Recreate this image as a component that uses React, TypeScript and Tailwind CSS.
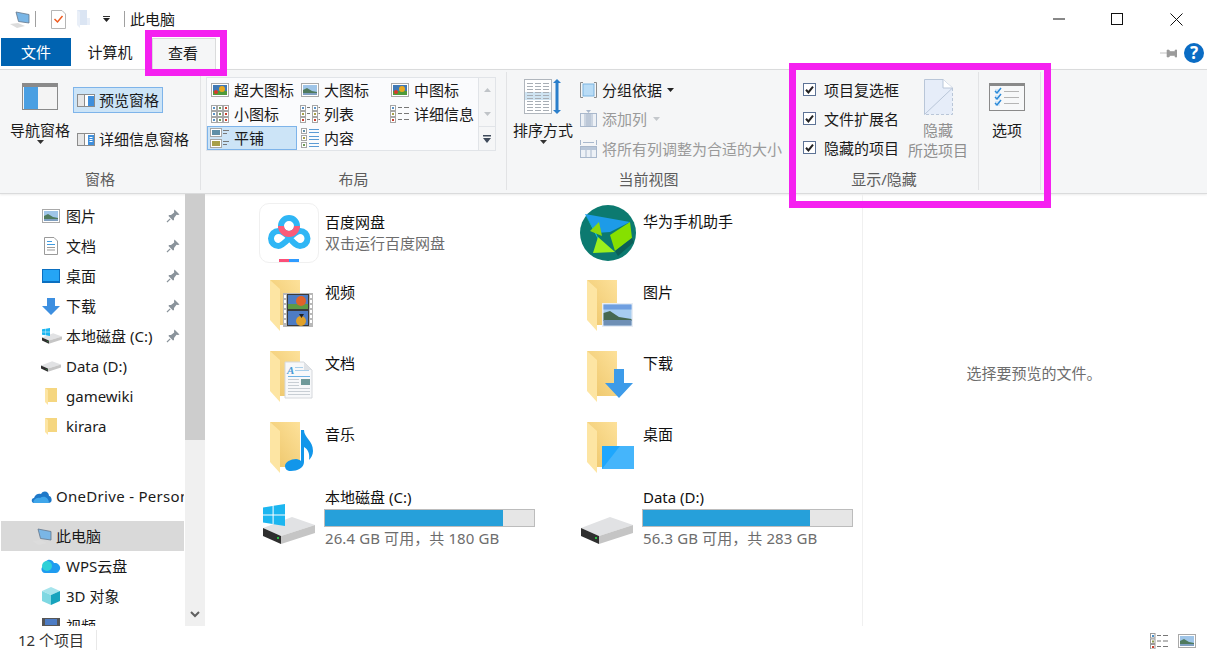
import React from "react";

const Landscape = ({ w = 18, h = 14 }: { w?: number; h?: number }) => (
  <svg width={w} height={h} viewBox="0 0 18 14" className="shrink-0">
    <rect x="0.5" y="0.5" width="17" height="13" fill="#fff" stroke="#a9a9a9" />
    <rect x="2" y="2" width="14" height="10" fill="#9fc5e8" />
    <path d="M2 7 L6 5 L11 8 L16 9 V12 H2 Z" fill="#4f7a5e" />
    <rect x="2" y="10" width="14" height="2" fill="#7f9fc0" />
  </svg>
);

const Flowers = () => (
  <svg width="18" height="14" viewBox="0 0 18 14" className="shrink-0">
    <rect x="0.5" y="0.5" width="17" height="13" fill="#fff" stroke="#a9a9a9" />
    <rect x="2" y="2" width="14" height="10" fill="#3f78b5" />
    <rect x="2" y="8" width="14" height="4" fill="#4f9a3a" />
    <circle cx="11" cy="6" r="3" fill="#e9a81f" />
    <circle cx="5" cy="9" r="2" fill="#d8392b" />
  </svg>
);

const Cell = ({ x, y, s, c }: { x: number; y: number; s: number; c: string }) => (
  <g>
    <rect x={x + 0.5} y={y + 0.5} width={s} height={s} fill="#fff" stroke="#a6a6a6" />
    <rect x={x + 2} y={y + 2} width={s - 3} height={s - 3} fill={c} />
  </g>
);

const SmallIcons = () => (
  <svg width="18" height="18" viewBox="0 0 18 18" className="shrink-0">
    {[0, 6, 12].map((y) =>
      [0, 6, 12].map((x, i) => (
        <Cell key={`${x}-${y}`} x={x} y={y} s={5} c={["#5b93c7", "#6e9a55", "#c9402f"][i]} />
      ))
    )}
  </svg>
);

const ListIcon = () => (
  <svg width="20" height="18" viewBox="0 0 20 18" className="shrink-0">
    {[0, 6, 12].map((y, i) => (
      <g key={y}>
        <Cell x={0} y={y} s={5} c={["#5b93c7", "#a8a04a", "#c9402f"][i]} />
        <rect x="7" y={y + 2} width="3" height="1" fill="#777" />
        <Cell x={12} y={y} s={5} c={["#5b93c7", "#a8a04a", "#c9402f"][i]} />
        <rect x="18.5" y={y + 2} width="1.5" height="1" fill="#777" />
      </g>
    ))}
  </svg>
);

const DetailsIcon = () => (
  <svg width="20" height="18" viewBox="0 0 20 18" className="shrink-0">
    {[0, 6, 12].map((y, i) => (
      <g key={y}>
        <Cell x={0} y={y} s={5} c={["#5b93c7", "#a8a04a", "#c9402f"][i]} />
        <rect x="8" y={y + 2} width="4" height="1" fill="#777" />
        <rect x="14" y={y + 2} width="5" height="1" fill="#777" />
      </g>
    ))}
  </svg>
);

const TileIcon = () => (
  <svg width="20" height="20" viewBox="0 0 20 20" className="shrink-0">
    <rect x="0.5" y="0.5" width="11" height="8" fill="#fff" stroke="#a6a6a6" />
    <rect x="2" y="2" width="8" height="5" fill="#5f8fa8" />
    <rect x="0.5" y="11.5" width="11" height="8" fill="#fff" stroke="#a6a6a6" />
    <rect x="2" y="13" width="8" height="5" fill="#a8a04a" />
    {[2, 5, 13, 16].map((y, i) => (
      <rect key={y} x="13" y={y} width={i % 2 ? 4 : 6} height="1" fill="#777" />
    ))}
  </svg>
);

const ContentIcon = () => (
  <svg width="18" height="20" viewBox="0 0 18 20" className="shrink-0">
    {[0, 7, 14].map((y, i) => (
      <g key={y}>
        <Cell x={0} y={y} s={5} c={["#5f8fa8", "#a8a04a", "#6e9a55"][i]} />
        <rect x="8" y={y + 1} width="10" height="1" fill="#5b9bd5" />
        <rect x="8" y={y + 4} width="10" height="1" fill="#5b9bd5" />
      </g>
    ))}
  </svg>
);

const PaneIcon = ({ blue = false }: { blue?: boolean }) => (
  <svg width="18" height="13" viewBox="0 0 18 13" className="shrink-0">
    <rect x="0.5" y="0.5" width="17" height="12" fill="#fff" stroke="#8c8c8c" />
    <rect x="1" y="1" width="6" height="11" fill="#e6e6e6" />
    <rect x="7" y="0" width="1" height="13" fill="#8c8c8c" />
    <rect x="11" y="2" width="6" height="10" fill="#3f8fdc" />
    {blue && <rect x="12.5" y="4" width="3" height="1" fill="#fff" />}
    {blue && <rect x="12.5" y="6" width="3" height="1" fill="#fff" />}
    {blue && <rect x="12.5" y="8" width="3" height="1" fill="#fff" />}
  </svg>
);

const Caret = ({ c = "#333" }: { c?: string }) => (
  <svg width="7" height="4" viewBox="0 0 7 4" className="shrink-0">
    <path d="M0 0 H7 L3.5 4 Z" fill={c} />
  </svg>
);

const Check = () => (
  <svg width="13" height="13" viewBox="0 0 13 13" className="shrink-0">
    <rect x="0.5" y="0.5" width="12" height="12" fill="#fff" stroke="#5d7396" />
    <path d="M3 6.8 L5.4 9.4 L10 3.6" fill="none" stroke="#222" strokeWidth="2" />
  </svg>
);

const Pin = () => (
  <svg width="14" height="14" viewBox="0 0 14 14">
    <path d="M8.5 0.5 L13.5 5.5 L12 6 L10.5 5.8 L8 9 L8 11 L7 11.5 L2.5 7 L3 6 L5 6 L8.2 3.5 L8 2 Z" fill="#8a939b" />
    <path d="M4.2 9.8 L1 13" stroke="#8a939b" strokeWidth="1.2" />
  </svg>
);

const Drive = ({ w = 52, h = 27 }: { w?: number; h?: number }) => (
  <svg width={w} height={h} viewBox="0 0 52 27" className="shrink-0">
    <path d="M0 11 L29 0 L52 8 L18 19 Z" fill="#e1e2e4" />
    <path d="M18 19 L52 8 V16 L18 27 Z" fill="#c5c5c5" />
    <path d="M0 11 L18 19 V27 L0 19 Z" fill="#2e2e2e" />
    <rect x="14" y="20" width="2" height="2" fill="#28c040" />
  </svg>
);

const WinLogo = ({ s = 22 }: { s?: number }) => (
  <svg width={s} height={s} viewBox="0 0 22 22" className="shrink-0">
    <path d="M0 3.5 L9.6 2 V10.4 H0 Z M10.6 1.8 L22 0 V10.4 H10.6 Z M0 11.6 H9.6 V20 L0 18.6 Z M10.6 11.6 H22 V22 L10.6 20.2 Z" fill="#1cb6f0" />
  </svg>
);

const FolderBody = () => (
  <g>
    <path d="M0 0 H30 V45 H10 Z" fill="url(#folderBack)" />
    <path d="M0 0 L10 9 V51 L0 40 Z" fill="#fde5a3" />
  </g>
);

const Folder = ({ dx = 11, dy = 6, children }: { dx?: number; dy?: number; children: React.ReactNode }) => (
  <svg width="64" height="60" viewBox="0 0 64 60" className="shrink-0">
    <defs>
      <linearGradient id="folderBack" x1="0" y1="1" x2="1" y2="0">
        <stop offset="0" stopColor="#edc568" />
        <stop offset="1" stopColor="#fde19a" />
      </linearGradient>
    </defs>
    <g transform={`translate(${dx} ${dy})`}>
      <FolderBody />
    </g>
    {children}
  </svg>
);

const FilmOverlay = () => (
  <g>
    <rect x="24" y="19" width="30" height="34" fill="#b8b8b8" />
    <rect x="28" y="20" width="22" height="32" fill="#3a3a3a" />
    <rect x="29" y="21" width="20" height="14" fill="#4d7cc4" />
    <rect x="29" y="37" width="20" height="14" fill="#4d7cc4" />
    <rect x="29" y="30" width="20" height="5" fill="#5e9a46" />
    <circle cx="42" cy="27" r="5" fill="#e0632a" />
    <circle cx="42" cy="47" r="5" fill="#e0a12a" />
    <path d="M40 40 h5 l-2.5 4z" fill="#222" />
    {[21, 26, 31, 36, 41, 46].map((y) => (
      <g key={y}>
        <rect x="25" y={y} width="2" height="3" fill="#fff" />
        <rect x="51" y={y} width="2" height="3" fill="#fff" />
      </g>
    ))}
  </g>
);

const DocOverlay = () => (
  <g>
    <path d="M26 17 H45 L53 25 V53 H26 Z" fill="#f7f8fa" stroke="#d5d8dc" />
    <path d="M45 17 V25 H53 Z" fill="#dfe2e6" />
    <text x="28" y="29" fontSize="11" fontStyle="italic" fontWeight="700" fill="#4a9bd6" fontFamily="Liberation Serif, serif">A</text>
    <rect x="36" y="22" width="8" height="1" fill="#a9cfea" />
    <rect x="36" y="25" width="14" height="1" fill="#a9cfea" />
    <rect x="29" y="31" width="22" height="1" fill="#6db2e4" />
    <rect x="42" y="34" width="9" height="6" fill="#6f9a9a" />
    {[34, 37, 40, 43, 46, 49].map((y) => (
      <rect key={y} x="29" y={y} width={y < 41 ? 11 : 22} height="1" fill="#c8ced4" />
    ))}
  </g>
);

const MusicOverlay = () => (
  <path d="M42 14 H45 C45 22 54 24 54 35 C54 39 52 42 50 44 C51 38 49 33 45 31 V46 C45 52 38 55 32 55 C28 55 26 53 26 50 C26 46 32 43 37 43 C39 43 41 44 42 45 Z" fill="#1296ea" />
);

const PictureOverlay = () => (
  <g>
    <rect x="25" y="29" width="31" height="24" fill="#e8edf4" />
    <rect x="26.5" y="30.5" width="28" height="21" fill="#a7cdf0" />
    <rect x="26.5" y="30.5" width="28" height="5" fill="#6f9fe0" />
    <path d="M26.5 39 L33 37 L42 43 L54.5 45 V47 H26.5 Z" fill="#46684f" />
    <rect x="26.5" y="46" width="28" height="5.5" fill="#6e8fb5" />
  </g>
);

const ArrowOverlay = () => <path d="M37 24 H47 V38 H56 L42 53 L28 38 H37 Z" fill="#3d9be9" />;

const DesktopOverlay = () => (
  <g>
    <rect x="25" y="30" width="32" height="23" fill="#1ea7fd" />
    <path d="M25 53 L43 30 H57 V53 Z" fill="#45b5fb" />
  </g>
);

const Baidu = () => (
  <div className="w-[60px] h-[60px] rounded-[10px] border border-[#f0f0f0] bg-white relative overflow-hidden">
    <svg width="58" height="58" viewBox="0 0 58 58">
      <path d="M18.5 27 A7.5 7.5 0 1 0 18.5 42 C25 42 33 27 40 27 A7.5 7.5 0 1 1 40 42 C36 42 33 38 29.5 34 C26 30 22 27 18.5 27" fill="none" stroke="#2fb6f5" strokeWidth="6" />
      <circle cx="29" cy="22" r="8" fill="none" stroke="#2fb6f5" strokeWidth="6" />
      <path d="M21 22 A8 8 0 0 0 37 22" fill="none" stroke="#fb5b78" strokeWidth="6" />
      <rect x="19" y="55" width="10" height="3" fill="#fb4f78" />
      <rect x="29" y="55" width="10" height="3" fill="#2e9bff" />
    </svg>
  </div>
);

const Huawei = () => (
  <div className="pl-[3px] pt-[2px]">
    <svg width="56" height="56" viewBox="0 0 56 56" className="shrink-0">
      <circle cx="28" cy="28" r="28" fill="#0c7a70" />
      <path d="M5 9 L50 17 L30 27 L16 28 Z" fill="#1d9be8" />
      <path d="M5 9 L22 42 L16 28 Z" fill="#0cc7ea" />
      <path d="M30 30 L50 17 L52 33 L35 46 Z" fill="#86e000" />
      <path d="M18 32 L35 47 L13 48 Z" fill="#9bf01c" />
      <path d="M10 26 L19 17 L22 31 Z" fill="#8ad80e" />
      <path d="M35 46 L52 33 L54 37 L38 51 Z" fill="#0a5f58" />
    </svg>
  </div>
);

const ThisPc = ({ w = 20 }: { w?: number }) => (
  <svg width={w} height={w * 0.85} viewBox="0 0 20 17" className="shrink-0">
    <path d="M0 13 L8 12 L15 15 L7 17 Z" fill="#dcdcdc" />
    <path d="M6 1 L19 3.5 V12 L8.5 10.5 Z" fill="#7ab6e6" stroke="#64768a" strokeWidth="0.8" />
  </svg>
);

const Row = ({ icon, label, pin }: { icon: React.ReactNode; label: string; pin?: boolean }) => (
  <div className="h-[30px] flex items-center pl-[41px]">
    <div className="w-[18px] h-[18px] flex items-center justify-center shrink-0">{icon}</div>
    <span className="ml-[6px] flex-1 whitespace-nowrap leading-[20px]">{label}</span>
    {pin && (
      <span className="mr-[4px] flex">
        <Pin />
      </span>
    )}
  </div>
);

const GalleryItem = ({ icon, label, active }: { icon: React.ReactNode; label: string; active?: boolean }) => (
  <div className={`h-[24px] flex items-center ${active ? "bg-[#cce4f7] border border-[#7eb4ea] pl-[2px]" : "pl-[3px]"}`}>
    <div className="w-[20px] flex justify-center shrink-0">{icon}</div>
    <span className="ml-[4px] whitespace-nowrap leading-[20px]">{label}</span>
  </div>
);

const Group = ({ w, label, border = true, children }: { w: string; label?: string; border?: boolean; children: React.ReactNode }) => (
  <div className={`${w} h-[118px] my-[2px] flex flex-col shrink-0 ${border ? "border-r border-[#e2e3e5]" : ""}`}>
    <div className="h-[96px] flex">{children}</div>
    <div className="h-[22px] flex items-center justify-center text-[#5c5c5c] leading-[20px]">{label}</div>
  </div>
);

const Tile = ({ icon, name, sub, pt = "pt-[8px]" }: { icon: React.ReactNode; name: string; sub?: string; pt?: string }) => (
  <div className="flex">
    <div className="w-[66px] shrink-0">{icon}</div>
    <div className={`${pt} leading-[20px]`}>
      <div className="text-[#111]">{name}</div>
      {sub && <div className="mt-[1px] text-[#6d6d6d]">{sub}</div>}
    </div>
  </div>
);

const DiskTile = ({ win, name, used, sub }: { win?: boolean; name: string; used: string; sub: string }) => (
  <div className="flex">
    <div className="w-[65px] shrink-0 relative h-[60px]">
      <div className="pt-[30px] pl-[4px]">
        <Drive />
      </div>
      {win && (
        <div className="absolute left-[4px] top-[17px]">
          <WinLogo />
        </div>
      )}
    </div>
    <div className="w-[211px] leading-[20px]">
      <div className="text-[#111] pl-[1px]">{name}</div>
      <div className="mt-[2px] h-[18px] bg-[#e6e6e6] border border-[#bcbcbc]">
        <div className={`${used} h-full bg-[#26a0da]`} />
      </div>
      <div className="mt-[1px] pl-[1px] text-[#6d6d6d] tracking-[0.1px]">{sub}</div>
    </div>
  </div>
);

export default function App() {
  return (
    <div className="relative w-[1207px] h-[656px] bg-white overflow-hidden flex flex-col text-[15px] text-[#1a1a1a] [font-family:'Noto_Sans','Noto_Sans_CJK_SC',sans-serif]">
      {/* title bar */}
      <div className="h-[38px] flex items-center shrink-0 pl-[10px]">
        <ThisPc />
        <div className="ml-[5px] w-px h-[16px] bg-[#a0a0a0]" />
        <svg width="15" height="19" viewBox="0 0 15 19" className="ml-[15px] shrink-0">
          <path d="M0.5 0.5 H11 L14.5 4 V18.5 H0.5 Z" fill="#fff" stroke="#b5b5b5" />
          <path d="M3.5 9 L6.5 12 L11.5 6" fill="none" stroke="#ef5a1f" strokeWidth="1.5" />
        </svg>
        <svg width="13" height="18" viewBox="0 0 13 18" className="ml-[11px] shrink-0">
          <path d="M0 0 H10 V15 H3 Z" fill="#dbe5f3" />
          <path d="M0 0 L3 2 V18 L0 15 Z" fill="#e9eff8" />
          <rect x="10" y="8" width="3" height="7" fill="#e9eff8" />
        </svg>
        <div className="ml-[13px] flex flex-col items-center gap-[1px] w-[7px]">
          <div className="w-[7px] h-px bg-[#333]" />
          <Caret c="#222" />
        </div>
        <div className="ml-[14px] w-px h-[16px] bg-[#a0a0a0]" />
        <span className="ml-[5px] leading-[20px]">此电脑</span>
        <div className="ml-auto flex items-center">
          <svg width="12" height="12" viewBox="0 0 12 12" className="mr-[46px]">
            <path d="M0 6 H12" stroke="#111" />
          </svg>
          <svg width="12" height="12" viewBox="0 0 12 12" className="mr-[47px]">
            <rect x="0.5" y="0.5" width="11" height="11" fill="none" stroke="#111" />
          </svg>
          <svg width="13" height="13" viewBox="0 0 13 13" className="mr-[24px]">
            <path d="M0.5 0.5 L12.5 12.5 M12.5 0.5 L0.5 12.5" stroke="#111" />
          </svg>
        </div>
      </div>

      {/* tabs */}
      <div className="h-[31px] flex shrink-0 items-start">
        <div className="ml-[1px] w-[70px] h-[28px] bg-[#0063b1] text-white flex items-center justify-center leading-[20px]">文件</div>
        <div className="w-[78px] h-[28px] flex items-center justify-center leading-[20px]">计算机</div>
        <div className="ml-[3px] w-[64px] h-[31px] pb-[3px] pr-[2px] bg-[#f5f6f7] border border-b-0 border-[#dadbdc] flex items-center justify-center leading-[20px]">查看</div>
        <div className="ml-auto mr-[3px] flex items-center gap-[7px] h-[30px]">
          <svg width="17" height="9" viewBox="0 0 17 9">
            <path d="M0 4 H7 M7 1 H9 L10 2.5 H15 V1 H17 V8 H15 V6.5 H10 L9 8 H7 Z" fill="#9b9b9b" stroke="#9b9b9b" strokeWidth="0.6" />
          </svg>
          <div className="w-[20px] h-[20px] rounded-full bg-[#0a6cc4] text-white flex items-center justify-center text-[17px] font-bold leading-[20px]">?</div>
        </div>
      </div>

      {/* ribbon */}
      <div className="h-[125px] shrink-0 bg-[#f5f6f7] border-t border-b border-[#dadbdc] flex shadow-[0_1px_2px_rgba(0,0,0,0.08)]">
        <Group w="w-[201px]" label="窗格">
          <div className="ml-[10px] w-[60px] flex flex-col items-center pt-[11px]">
            <svg width="36" height="27" viewBox="0 0 36 27">
              <rect x="0.5" y="0.5" width="35" height="26" fill="#f4f4f4" stroke="#8a8a8a" />
              <rect x="1" y="1" width="34" height="3" fill="#8a8a8a" />
              <rect x="2" y="4" width="14" height="22" fill="#4a9fe2" />
            </svg>
            <span className="mt-[10px] leading-[20px] whitespace-nowrap">导航窗格</span>
            <div className="flex">
              <Caret />
            </div>
          </div>
          <div className="ml-[3px] pt-[15px]">
            <div className="w-[90px] h-[26px] bg-[#cce4f7] border border-[#7eb4ea] flex items-center pl-[3px]">
              <PaneIcon />
              <span className="ml-[4px] leading-[20px] whitespace-nowrap">预览窗格</span>
            </div>
            <div className="mt-[13px] h-[26px] flex items-center pl-[4px]">
              <PaneIcon blue />
              <span className="ml-[4px] leading-[20px] whitespace-nowrap">详细信息窗格</span>
            </div>
          </div>
        </Group>

        <Group w="w-[306px]" label="布局">
          <div className="ml-[5px] mt-[5px] h-[74px] flex">
            <div className="w-[273px] h-[74px] bg-[#fafbfd] border border-[#e1e4e8] grid grid-cols-[90px_90px_90px] grid-rows-[24px_24px_24px]">
              <GalleryItem icon={<Flowers />} label="超大图标" />
              <GalleryItem icon={<Landscape />} label="大图标" />
              <GalleryItem icon={<Flowers />} label="中图标" />
              <GalleryItem icon={<SmallIcons />} label="小图标" />
              <GalleryItem icon={<ListIcon />} label="列表" />
              <GalleryItem icon={<DetailsIcon />} label="详细信息" />
              <GalleryItem icon={<TileIcon />} label="平铺" active />
              <GalleryItem icon={<ContentIcon />} label="内容" />
            </div>
            <div className="w-[17px] h-[74px] border border-l-0 border-[#e1e4e8] flex flex-col items-center">
              <div className="h-[24px] flex items-center">
                <svg width="7" height="4" viewBox="0 0 7 4">
                  <path d="M0 4 H7 L3.5 0 Z" fill="#c0c4c8" />
                </svg>
              </div>
              <div className="h-[24px] flex items-center">
                <Caret c="#c0c4c8" />
              </div>
              <div className="h-[24px] w-full flex items-center justify-center border-t border-[#e1e4e8]">
                <svg width="8" height="8" viewBox="0 0 8 8">
                  <rect width="8" height="1.5" fill="#3f4a5a" />
                  <path d="M0 3 H8 L4 8 Z" fill="#3f4a5a" />
                </svg>
              </div>
            </div>
          </div>
        </Group>

        <Group w="w-[283px]" label="当前视图" border={false}>
          <div className="ml-[6px] w-[60px] flex flex-col items-center pt-[7px]">
            <svg width="38" height="36" viewBox="0 0 38 36">
              <rect x="0.5" y="0.5" width="27" height="34" fill="#fff" stroke="#b0b6bd" />
              <rect x="1" y="13" width="26" height="8" fill="#cfe4f2" />
              {[4, 7, 10, 13, 16, 19, 22, 25, 28, 31].map((y) => (
                <g key={y}>
                  <rect x="3" y={y} width="6" height="1" fill="#a8aeb5" />
                  <rect x="11" y={y} width="6" height="1" fill="#a8aeb5" />
                  <rect x="19" y={y} width="6" height="1" fill="#a8aeb5" />
                </g>
              ))}
              <path d="M33 0 L37 4 H34.5 V31 H37 L33 35 L29 31 H31.5 V4 H29 Z" fill="#2b7fcb" />
            </svg>
            <span className="mt-[5px] leading-[20px] whitespace-nowrap">排序方式</span>
            <div className="flex">
              <Caret />
            </div>
          </div>
          <div className="ml-[7px] pt-[3px] flex flex-col">
            <div className="h-[29px] flex items-center">
              <svg width="17" height="16" viewBox="0 0 17 16" className="shrink-0">
                <path d="M3 0.5 H0.5 V15.5 H3 M14 0.5 H16.5 V15.5 H14" fill="none" stroke="#8c8c8c" />
                <rect x="3" y="2" width="11" height="12" fill="#b9dcf6" stroke="#7db4e0" />
              </svg>
              <span className="ml-[5px] leading-[20px] whitespace-nowrap">分组依据</span>
              <span className="ml-[5px] flex">
                <Caret c="#222" />
              </span>
            </div>
            <div className="h-[29px] flex items-center text-[#9a9a9a]">
              <svg width="17" height="17" viewBox="0 0 17 17" className="shrink-0">
                <rect x="0.5" y="3.5" width="16" height="13" fill="#edf1f6" stroke="#a9b8cc" />
                <rect x="6" y="4" width="5" height="12" fill="#bcc8d8" />
                <path d="M5 4 V16 M12 4 V16" stroke="#a9b8cc" />
                <path d="M6 0 H11 L8.5 3 Z" fill="#a9b8cc" />
              </svg>
              <span className="ml-[5px] leading-[20px] whitespace-nowrap">添加列</span>
              <span className="ml-[6px] flex">
                <Caret c="#c4c8cc" />
              </span>
            </div>
            <div className="h-[31px] flex items-center text-[#9a9a9a]">
              <svg width="17" height="18" viewBox="0 0 17 18" className="shrink-0">
                <path d="M0.5 0 V5 M16.5 0 V5 M3 2.5 H14" stroke="#a9b8cc" />
                <rect x="0.5" y="6.5" width="16" height="11" fill="#edf1f6" stroke="#a9b8cc" />
                <rect x="1" y="7" width="15" height="3" fill="#b8c6d8" />
                <path d="M6 10 V17 M11 10 V17" stroke="#a9b8cc" />
              </svg>
              <span className="ml-[5px] leading-[20px] whitespace-nowrap">将所有列调整为合适的大小</span>
            </div>
          </div>
        </Group>

        <Group w="w-[189px]" label="显示/隐藏">
          <div className="ml-[13px] pt-[3px] flex flex-col">
            {["项目复选框", "文件扩展名", "隐藏的项目"].map((t) => (
              <div key={t} className="h-[29px] flex items-center">
                <Check />
                <span className="ml-[8px] leading-[20px] whitespace-nowrap">{t}</span>
              </div>
            ))}
          </div>
          <div className="ml-[7px] w-[64px] flex flex-col items-center pt-[7px] text-[#8f8f8f]">
            <svg width="29" height="36" viewBox="0 0 29 36">
              <path d="M0.5 0.5 H19 L28.5 9 V35.5 H0.5 Z" fill="#e6edf9" />
              <path d="M0.5 35.5 V0.5 H19 L28.5 9 L0.5 35.5" fill="none" stroke="#b9c6d8" />
              <path d="M28.5 9 V35.5 H0.5" fill="none" stroke="#b9c6d8" strokeDasharray="3 2" />
              <path d="M19 0.5 V9 H28.5" fill="#fff" stroke="#b9c6d8" />
            </svg>
            <span className="mt-[5px] leading-[20px] whitespace-nowrap">隐藏</span>
            <span className="leading-[20px] whitespace-nowrap">所选项目</span>
          </div>
        </Group>

        <Group w="w-[62px]">
          <div className="w-full flex flex-col items-center pt-[11px] pr-[5px]">
            <svg width="36" height="28" viewBox="0 0 36 28">
              <rect x="0.5" y="0.5" width="35" height="27" fill="#f7f8f9" stroke="#8a8a8a" />
              <rect x="1" y="1" width="34" height="2" fill="#8a8a8a" />
              {[8, 14, 20].map((y) => (
                <g key={y}>
                  <rect x="6" y={y - 2} width="5" height="5" fill="#d8e9f8" />
                  <path d={`M6 ${y} L8 ${y + 2} L12 ${y - 3}`} fill="none" stroke="#2b8ad8" strokeWidth="1.5" />
                  <rect x="15" y={y} width="15" height="1" fill="#b5b5b5" />
                </g>
              ))}
            </svg>
            <span className="mt-[9px] leading-[20px] whitespace-nowrap">选项</span>
          </div>
        </Group>
      </div>

      {/* main */}
      <div className="flex-1 min-h-0 flex overflow-hidden">
        <div className="w-[184px] shrink-0 overflow-hidden pt-[7px] pl-[1px]">
          <Row icon={<Landscape />} label="图片" pin />
          <Row
            icon={
              <svg width="14" height="18" viewBox="0 0 14 18">
                <path d="M0.5 0.5 H10 L13.5 4 V17.5 H0.5 Z" fill="#fff" stroke="#9a9a9a" />
                <rect x="3" y="4" width="5" height="1" fill="#3f9be0" />
                <rect x="3" y="7" width="8" height="1" fill="#3f9be0" />
                <rect x="3" y="10" width="8" height="1" fill="#9a9a9a" />
                <rect x="3" y="12.5" width="8" height="1" fill="#9a9a9a" />
              </svg>
            }
            label="文档"
            pin
          />
          <Row
            icon={
              <svg width="18" height="14" viewBox="0 0 18 14">
                <rect width="18" height="14" fill="#0b6fc0" />
                <rect x="1" y="1" width="16" height="11" fill="#25a5f5" />
              </svg>
            }
            label="桌面"
            pin
          />
          <Row
            icon={
              <svg width="18" height="17" viewBox="0 0 18 17">
                <path d="M5 0 H13 V8 H18 L9 17 L0 8 H5 Z" fill="#3d8fe0" />
              </svg>
            }
            label="下载"
            pin
          />
          <Row
            icon={
              <div className="relative w-[20px] h-[16px]">
                <div className="absolute left-0 bottom-0">
                  <Drive w={20} h={11} />
                </div>
                <div className="absolute left-0 top-0">
                  <WinLogo s={8} />
                </div>
              </div>
            }
            label="本地磁盘 (C:)"
            pin
          />
          <Row icon={<Drive w={20} h={11} />} label="Data (D:)" />
          {["gamewiki", "kirara"].map((t) => (
            <Row
              key={t}
              icon={
                <svg width="12" height="17" viewBox="0 0 12 17">
                  <path d="M0 0 H12 V14 H3 Z" fill="#f5d680" />
                  <path d="M0 0 L3 2 V17 L0 14 Z" fill="#fde5a3" />
                </svg>
              }
              label={t}
            />
          ))}
          <div className="h-[40px]" />
          <div className="h-[30px] flex items-center pl-[30px]">
            <svg width="21" height="13" viewBox="0 0 21 13" className="shrink-0">
              <path d="M3 13 C0 13 0 8 3 8 C4 4 8 3 10 4 C12 0 18 1 18 6 C21 6 22 13 18 13 Z" fill="#1e78c8" />
              <path d="M3 13 C1 11 5 7 9 8 C13 5 18 8 18 13 Z" fill="#3fa6ea" />
            </svg>
            <span className="ml-[4px] whitespace-nowrap leading-[20px] tracking-[0.3px]">OneDrive - Personal</span>
          </div>
          <div className="mt-[10px] h-[30px] bg-[#d9d9d9] flex items-center pl-[31px]">
            <ThisPc />
            <span className="ml-[4px] whitespace-nowrap leading-[20px]">此电脑</span>
          </div>
          <div className="h-[30px] flex items-center pl-[40px]">
            <svg width="20" height="14" viewBox="0 0 20 14" className="shrink-0">
              <path d="M4 14 C0 14 -1 8 3 7 C3 1 10 -2 13 4 C18 3 21 9 18 12 C17 14 15 14 14 14 Z" fill="#1f9cf0" />
              <circle cx="6" cy="7" r="5" fill="#2ed0d8" />
            </svg>
            <span className="ml-[5px] whitespace-nowrap leading-[20px]">WPS云盘</span>
          </div>
          <Row
            icon={
              <svg width="18" height="18" viewBox="0 0 18 18">
                <path d="M9 0 L18 4 L9 8 L0 4 Z" fill="#a6e4ec" />
                <path d="M0 4 L9 8 V18 L0 14 Z" fill="#7fd8e2" />
                <path d="M18 4 L9 8 V18 L18 14 Z" fill="#17a3bd" />
              </svg>
            }
            label="3D 对象"
          />
          <Row
            icon={
              <svg width="18" height="16" viewBox="0 0 18 16">
                <rect width="18" height="16" fill="#555" />
                <rect x="3" y="1" width="12" height="6" fill="#4d7cc4" />
                <rect x="3" y="9" width="12" height="6" fill="#6e9a55" />
              </svg>
            }
            label="视频"
          />
        </div>

        {/* scrollbar */}
        <div className="ml-[1px] w-[20px] shrink-0 bg-[#f0f0f0] flex flex-col justify-between">
          <div className="h-[246px] bg-[#cdcdcd]" />
          <div className="h-[22px] flex items-center justify-center mb-[1px]">
            <svg width="10" height="7" viewBox="0 0 10 7">
              <path d="M1 1 L5 5 L9 1" fill="none" stroke="#606060" strokeWidth="2" />
            </svg>
          </div>
        </div>

        {/* content */}
        <div className="w-[658px] shrink-0 border-r border-[#f0f0f0] pt-[9px] pl-[54px]">
          <div className="grid grid-cols-[318px_318px] auto-rows-[71px]">
            <Tile icon={<Baidu />} name="百度网盘" sub="双击运行百度网盘" pt="pt-[9px]" />
            <Tile icon={<Huawei />} name="华为手机助手" pt="pt-[8px]" />
            <Tile icon={<Folder><FilmOverlay /></Folder>} name="视频" />
            <Tile icon={<Folder dx={10}><PictureOverlay /></Folder>} name="图片" />
            <Tile icon={<Folder><DocOverlay /></Folder>} name="文档" />
            <Tile icon={<Folder dx={10}><ArrowOverlay /></Folder>} name="下载" />
            <Tile icon={<Folder><MusicOverlay /></Folder>} name="音乐" />
            <Tile icon={<Folder dx={10}><DesktopOverlay /></Folder>} name="桌面" />
            <DiskTile win name="本地磁盘 (C:)" used="w-[85%]" sub="26.4 GB 可用，共 180 GB" />
            <DiskTile name="Data (D:)" used="w-[80%]" sub="56.3 GB 可用，共 283 GB" />
          </div>
        </div>

        {/* preview */}
        <div className="flex-1 pt-[169px] pr-[2px] text-center text-[#6d6d6d] leading-[20px]">选择要预览的文件。</div>
      </div>

      {/* status */}
      <div className="h-[30px] shrink-0 flex items-center pl-[18px]">
        <span className="leading-[20px] mb-[2px] pr-[12px] border-r border-[#e8e8e8] text-[#333]">12 个项目</span>
        <div className="ml-auto mr-[11px] flex items-center gap-[10px]">
          <svg width="18" height="16" viewBox="0 0 18 16">
            {[0, 5.5, 11].map((y, i) => (
              <g key={y}>
                <rect x="0.5" y={y + 0.5} width="4.5" height="4.5" fill="#fff" stroke="#9a9a9a" />
                <rect x="2" y={y + 2} width="2" height="2" fill={["#4b8fc7", "#8a9a4a", "#c9402f"][i]} />
                <rect x="7" y={y + 2} width="4" height="1" fill="#777" />
                <rect x="13" y={y + 2} width="5" height="1" fill="#777" />
              </g>
            ))}
          </svg>
          <Landscape w={18} h={14} />
        </div>
      </div>

      {/* annotation highlight boxes */}
      <div className="absolute left-[145px] top-[30px] w-[82px] h-[46px] border-[7px] border-[#f520f0]" />
      <div className="absolute left-[789px] top-[63px] w-[262px] h-[145px] border-[7px] border-[#f520f0]" />
    </div>
  );
}
